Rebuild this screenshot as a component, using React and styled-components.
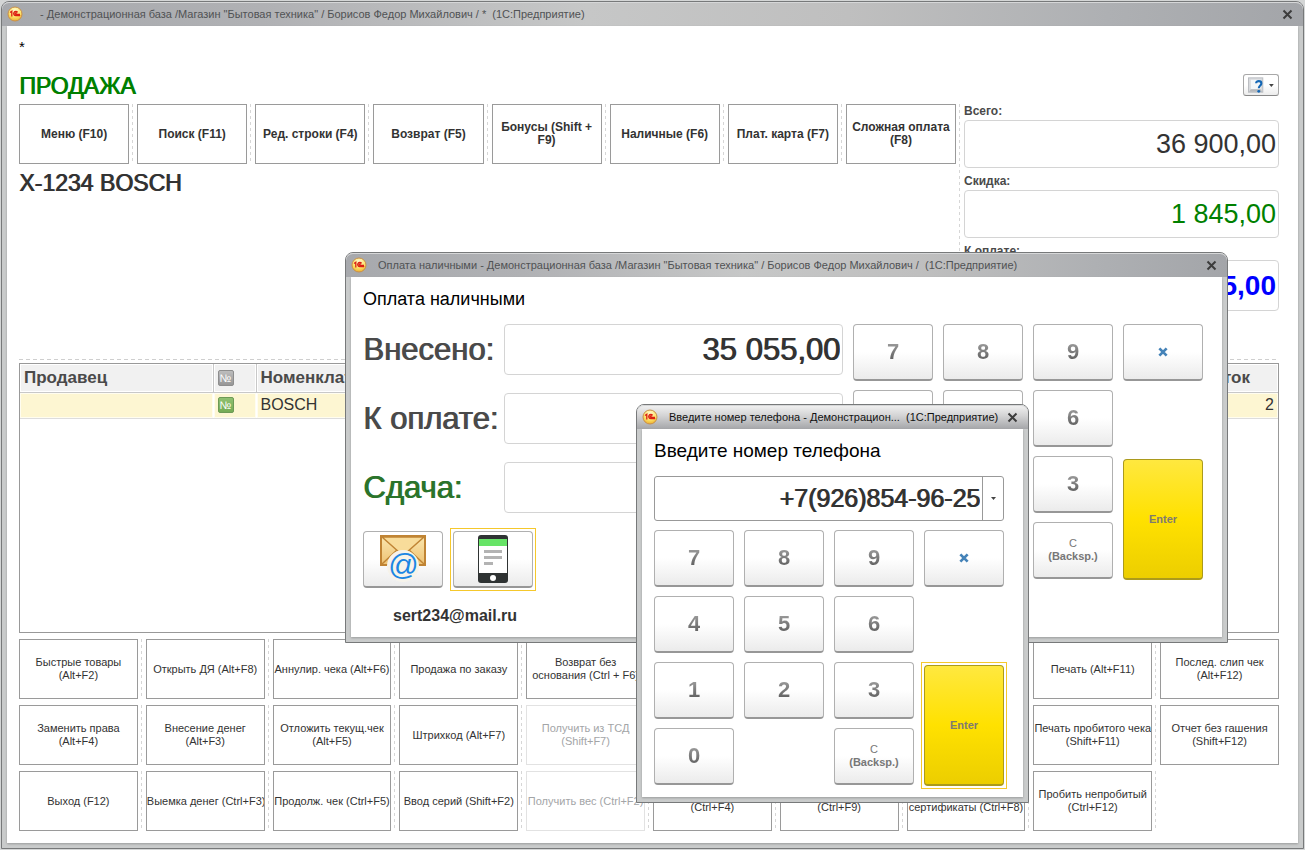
import React from "react";
import styled, { createGlobalStyle, css } from "styled-components";

const GlobalStyle = createGlobalStyle`
  * { box-sizing: border-box; }
  body {
    margin: 0;
    background: #d4d6d6;
    font-family: "Liberation Sans", Arial, sans-serif;
    font-size: 11px;
    color: #333;
  }
  button, input { font-family: inherit; color: inherit; }
`;

/* Regular letters thickened by one pixel, the way the till draws its big captions */
const thick = css`
  text-shadow: 1px 0 0 currentColor;
`;

const Desktop = styled.div`
  position: relative;
  display: flex;
  min-height: 100vh;
  padding: 1px;
`;

const Frame = styled.section`
  display: flex;
  flex-direction: column;
  border: 1px solid #77797a;
  border-radius: 8px 8px 0 0;
  background: #c9cbcb;
`;

const MainFrame = styled(Frame)`
  flex: 1;
  min-width: 0;
`;

const DialogFrame = styled(Frame)`
  position: absolute;
  left: ${(p) => p.$left}px;
  top: ${(p) => p.$top}px;
  width: ${(p) => p.$width}px;
`;

const TitleBar = styled.header`
  display: flex;
  align-items: center;
  height: 24px;
  padding: 0 8px 0 5px;
  border-radius: 7px 7px 0 0;
  box-shadow: inset 0 1px 0 #d6d7d8;
  color: ${(p) => (p.$active ? "#111" : "#505254")};
  background: ${(p) =>
    p.$active
      ? "linear-gradient(180deg, #f2f2f2 0%, #d3d3d4 45%, #a5a6a9 100%)"
      : "linear-gradient(90deg, #a7a9ad 0%, #b0b1b4 20%, #c6c7c7 45%, #bfbfbf 65%, #aeb0b3 85%, #a3a5a9 100%)"};
`;

const TitleText = styled.h1`
  flex: 1;
  min-width: 0;
  margin: 0 0 0 11px;
  overflow: hidden;
  white-space: pre;
  font-size: 11px;
  line-height: 16px;
  font-weight: 400;
`;

const CloseButton = styled.button`
  display: flex;
  padding: 2px;
  border: 0;
  background: none;
`;

const Body = styled.div`
  flex: 1;
  display: flex;
  flex-direction: column;
  margin: 0 5px 5px;
  padding: 12px 19px 12px 12px;
  background: #fff;
  box-shadow: 0 1px 2px #9a9c9c;
`;

const Status = styled.div`
  height: 36px;
  font-size: 15px;
  line-height: 18px;
  color: #000;
`;

const HeadRow = styled.div`
  display: flex;
  justify-content: space-between;
  align-items: flex-start;
  height: 30px;
`;

const Mode = styled.h2`
  ${thick}
  margin: 0;
  font-size: 23px;
  line-height: 24px;
  font-weight: 400;
  color: #008000;
`;

const HelpButton = styled.button`
  display: flex;
  align-items: center;
  gap: 5px;
  width: 36px;
  height: 22px;
  padding: 0 4px;
  border: 1px solid #a8a8a8;
  border-bottom-color: #888;
  border-radius: 3px;
  background: linear-gradient(#fff 50%, #ececec);
`;

const Upper = styled.div`
  display: flex;
  padding-bottom: 48px;
`;

const Left = styled.div`
  flex: 1;
  min-width: 0;
`;

const Divider = styled.div`
  flex: none;
  width: 1px;
  margin: 0 4px 0 3px;
  margin-bottom: ${(p) => (p.$long ? "-44px" : "0")};
  background: repeating-linear-gradient(#d6d6d6 0 3px, transparent 3px 6px);
`;

const Rule = styled.div`
  height: 1px;
  margin-bottom: 3px;
  background: repeating-linear-gradient(90deg, #cfcfcf 0 4px, transparent 4px 7px);
`;

const ButtonRow = styled.div`
  display: flex;
  height: 60px;
`;

const ActionButton = styled.button`
  flex: 1;
  min-width: 0;
  padding: 0;
  border: 1px solid #9a9a9a;
  background: #fff;
  font-size: ${(p) => (p.$strong ? "12px" : "11px")};
  line-height: 13px;
  font-weight: ${(p) => (p.$strong ? 700 : 400)};
  white-space: pre;
  text-align: center;
  overflow: hidden;
  &:disabled {
    color: #a3a5a7;
    border-color: #e2e2e2;
  }
`;

const EmptyCell = styled.div`
  flex: 1;
  border: 1px solid transparent;
`;

const Product = styled.h2`
  ${thick}
  margin: 6px 0 0;
  font-size: 23px;
  line-height: 26px;
  font-weight: 400;
`;

const Totals = styled.div`
  display: flex;
  flex-direction: column;
  gap: 6px;
  width: 315px;
`;

const TotalLabel = styled.label`
  display: flex;
  flex-direction: column;
  gap: 2px;
  font-size: 12px;
  line-height: 14px;
  font-weight: 700;
  color: #4a4a4a;
`;

const TotalInput = styled.input`
  width: 100%;
  height: ${(p) => (p.$due ? 51 : 48)}px;
  padding: 0 2px;
  border: 1px solid #d4d4d4;
  border-radius: 4px;
  font-size: ${(p) => (p.$due ? 28 : 27)}px;
  font-weight: ${(p) => (p.$due ? 700 : 400)};
  color: ${(p) => p.$color};
  text-align: right;
`;

const TableBox = styled.div`
  flex: 1;
  min-height: 270px;
  margin-bottom: 6px;
  border: 1px solid #999;
`;

const Table = styled.table`
  width: 100%;
  table-layout: fixed;
  border-collapse: collapse;
  font-size: 16px;
  line-height: 20px;
  th {
    height: 28px;
    padding: 0 4px;
    border-right: 1px solid #c8c8c8;
    border-bottom: 1px solid #c8c8c8;
    background: #f1f1f1;
    box-shadow: inset 0 0 0 1px #fff;
    font-size: 17px;
    text-align: left;
    color: #4a4a4a;
  }
  td {
    height: 26px;
    padding: 0 4px;
    border-right: 1px solid #fff;
    border-bottom: 1px solid #ddd;
    background: #fdf6d2;
    box-shadow: inset 0 0 0 1px #fffdf0;
  }
  th:last-child, td:last-child { border-right: 0; }
`;

const NumberCell = styled.td`
  text-align: right;
`;

const NumberBadge = styled.span`
  display: flex;
  align-items: center;
  justify-content: center;
  width: 16px;
  height: 16px;
  border: 1px solid ${(p) => (p.$green ? "#6d9a56" : "#8e8e8e")};
  border-radius: 2px;
  background: ${(p) =>
    p.$green ? "linear-gradient(#8fc070, #75ab55)" : "linear-gradient(#bdbdbd, #979797)"};
  color: #fff;
  font-size: 11px;
  line-height: 12px;
  font-weight: 400;
`;

const Footer = styled.div`
  display: flex;
  flex-direction: column;
  gap: 6px;
`;

const Heading = styled.h2`
  margin: 0 0 15px;
  font-size: ${(p) => (p.$large ? 19 : 18)}px;
  line-height: 20px;
  font-weight: 400;
  color: #000;
`;

const PayLayout = styled.div`
  display: flex;
  align-items: flex-start;
  gap: 10px;
`;

const PayForm = styled.div`
  flex: 1;
  display: flex;
  flex-direction: column;
  gap: 18px;
`;

const PayRow = styled.label`
  ${thick}
  display: grid;
  grid-template-columns: 141px 1fr;
  align-items: center;
  font-size: 31px;
  line-height: 36px;
  color: ${(p) => (p.$green ? "#2b742b" : "#4a4a4a")};
  white-space: nowrap;
`;

const PayInput = styled.input`
  ${thick}
  width: 100%;
  height: 51px;
  padding: 0 2px;
  border: 1px solid #d4d4d4;
  border-radius: 4px;
  color: #333;
  font-size: 31px;
  text-align: right;
`;

const SendRow = styled.div`
  display: flex;
  gap: 10px;
`;

const Email = styled.div`
  height: 19px;
  padding-left: 30px;
  font-size: 16px;
  line-height: 19px;
  font-weight: 700;
`;

const focusRing = css`
  position: relative;
  &::after {
    content: "";
    position: absolute;
    inset: -4px -4px -5px;
    border: 1px solid #f5c82c;
  }
`;

const Key = styled.button`
  display: flex;
  align-items: center;
  justify-content: center;
  width: 80px;
  height: 57px;
  padding: 0;
  border: 1px solid #b0b0b0;
  border-bottom: 2px solid #979797;
  border-radius: 4px;
  background: linear-gradient(#fff 50%, #ebebeb);
  ${(p) => p.$focused && focusRing}
`;

const EnterKey = styled(Key)`
  grid-column: 4;
  grid-row: 3 / span 2;
  height: 121px;
  margin-top: 3px;
  border-color: #ab9a1c;
  background: linear-gradient(#ffe83f, #ffe100 50%, #ecce00);
  color: #7f7a70;
  font-size: 11px;
  font-weight: 700;
`;

const Digit = styled.span`
  font-size: 22px;
  line-height: 26px;
  font-weight: 700;
  color: transparent;
  background: linear-gradient(#a0a0a0 10%, #585858 90%);
  background-clip: text;
`;

const KeyNote = styled.span`
  display: flex;
  flex-direction: column;
  font-size: 11px;
  line-height: 13px;
  color: #777;
`;

const Pad = styled.div`
  display: grid;
  grid-template-columns: repeat(4, 80px);
  grid-template-rows: repeat(4, 57px);
  gap: 9px 10px;
`;

const PadCell = styled.div`
  grid-column: ${(p) => p.$col};
  grid-row: ${(p) => p.$row};
`;

const Combo = styled.div`
  display: flex;
  height: 45px;
  margin-bottom: 9px;
  border: 1px solid #999;
  border-radius: 3px;
`;

const ComboInput = styled.input`
  ${thick}
  flex: 1;
  min-width: 0;
  padding: 0 2px;
  border: 0;
  background: none;
  font-size: 25px;
  text-align: right;
`;

const ComboButton = styled.button`
  display: flex;
  align-items: center;
  justify-content: center;
  width: 21px;
  padding: 0;
  border: 0;
  border-left: 1px solid #999;
  background: none;
`;

function Logo() {
  return (
    <svg width="16" height="16" viewBox="0 0 16 16" aria-hidden="true">
      <defs>
        <radialGradient id="coin" cx="50%" cy="25%" r="75%">
          <stop offset="0" stopColor="#fffbd0" />
          <stop offset="0.6" stopColor="#fde36a" />
          <stop offset="1" stopColor="#eeb02c" />
        </radialGradient>
      </defs>
      <circle cx="8" cy="8" r="7" fill="url(#coin)" stroke="#c98f4a" strokeWidth="1" />
      <path
        d="M3 6.5 4.8 5.2V10.5M10.6 6.4A2.1 2.1 0 1 0 8.8 9.6H13.2M9.6 7.6a.7.7 0 1 0-.7.7H13"
        fill="none"
        stroke="#dc1f12"
        strokeWidth="1.3"
      />
    </svg>
  );
}

function Cross({ size = 11, color = "#3c3c3c", width = 2 }) {
  return (
    <svg width={size} height={size} viewBox="0 0 11 11" aria-hidden="true">
      <path d="M1.5 1.5 9.5 9.5M9.5 1.5 1.5 9.5" stroke={color} strokeWidth={width} fill="none" />
    </svg>
  );
}

function Caret() {
  return (
    <svg width="5" height="3" viewBox="0 0 5 3" aria-hidden="true">
      <path d="M0 0H5L2.5 3Z" fill="#444" />
    </svg>
  );
}

function HelpIcon() {
  return (
    <svg width="17" height="17" viewBox="0 0 17 17" aria-hidden="true">
      <rect x="0.5" y="0.5" width="15" height="15" fill="#d9dbde" stroke="#b9bcc0" />
      <rect x="3" y="2.5" width="10" height="10" fill="#f4f6f8" />
      <path d="M1 15 3 12.5H13L15 15Z" fill="#b4b7bb" />
      <path
        d="M8.5 6.2C8.5 3.2 14 3.2 14 6.3C14 8.6 11.3 8.4 11.3 11.4"
        fill="none"
        stroke="#1467b5"
        strokeWidth="2.2"
      />
      <circle cx="11.3" cy="14.6" r="1.5" fill="#1467b5" />
    </svg>
  );
}

function MailIcon() {
  return (
    <svg width="46" height="50" viewBox="0 0 46 50" aria-hidden="true">
      <defs>
        <linearGradient id="paper" x1="0" y1="0" x2="0" y2="1">
          <stop offset="0" stopColor="#fbe7ae" />
          <stop offset="1" stopColor="#edc274" />
        </linearGradient>
      </defs>
      <rect x="1" y="2" width="44" height="29" fill="url(#paper)" stroke="#c08434" strokeWidth="2" />
      <path d="M2 30 17 16M44 30 29 16" stroke="#c08434" strokeWidth="1.5" />
      <path d="M2 3 20 19Q23 21 26 19L44 3Z" fill="#f8dc9a" stroke="#c08434" strokeWidth="1.5" />
      <circle cx="23" cy="32" r="16" fill="#f6f3ea" />
      <text
        x="23"
        y="41"
        textAnchor="middle"
        fontFamily="Liberation Sans, Arial, sans-serif"
        fontStyle="italic"
        fontSize="30"
        fill="#1b86e3"
      >
        @
      </text>
    </svg>
  );
}

function PhoneIcon() {
  return (
    <svg width="30" height="48" viewBox="0 0 30 48" aria-hidden="true">
      <rect width="30" height="48" rx="3" fill="#2f3333" />
      <rect x="1" y="4" width="28" height="7" fill="#67e467" />
      <rect x="1" y="11" width="28" height="27" fill="#fff" />
      <path d="M6 16.500H24M6 22.500H24M6 28.500H15" stroke="#b3b3b3" strokeWidth="3" />
      <circle cx="15" cy="43" r="3" fill="#fff" />
    </svg>
  );
}

function Title({ text, active }) {
  return (
    <TitleBar $active={active}>
      <Logo />
      <TitleText>{text}</TitleText>
      <CloseButton type="button" aria-label="Закрыть">
        <Cross />
      </CloseButton>
    </TitleBar>
  );
}

function Buttons({ items, strong }) {
  return (
    <ButtonRow>
      {items.map((item, i) => (
        <React.Fragment key={i}>
          {i > 0 && <Divider />}
          {item ? (
            <ActionButton type="button" $strong={strong} disabled={item.startsWith("Получить")}>
              {item}
            </ActionButton>
          ) : (
            <EmptyCell />
          )}
        </React.Fragment>
      ))}
    </ButtonRow>
  );
}

const digits = ["7", "8", "9", "4", "5", "6", "1", "2", "3", "0"];

function Keypad({ focused }) {
  return (
    <Pad>
      {digits.map((d, i) => (
        <PadCell key={d} $col={(i % 3) + 1} $row={Math.floor(i / 3) + 1}>
          <Key type="button">
            <Digit>{d}</Digit>
          </Key>
        </PadCell>
      ))}
      <PadCell $col={4} $row={1}>
        <Key type="button" aria-label="Очистить">
          <Cross size={10} color="#4583b8" width={3} />
        </Key>
      </PadCell>
      <PadCell $col={3} $row={4}>
        <Key type="button">
          <KeyNote>
            <span>C</span>
            <b>(Backsp.)</b>
          </KeyNote>
        </Key>
      </PadCell>
      <EnterKey type="button" $focused={focused}>
        Enter
      </EnterKey>
    </Pad>
  );
}

const topActions = [
  "Меню (F10)",
  "Поиск (F11)",
  "Ред. строки (F4)",
  "Возврат (F5)",
  "Бонусы (Shift +\nF9)",
  "Наличные (F6)",
  "Плат. карта (F7)",
  "Сложная оплата\n(F8)",
];

const footerActions = [
  [
    "Быстрые товары\n(Alt+F2)",
    "Открыть ДЯ (Alt+F8)",
    "Аннулир. чека (Alt+F6)",
    "Продажа по заказу",
    "Возврат без\nоснования (Ctrl + F6)",
    "Скидки",
    "Карта",
    "Сертификат",
    "Печать (Alt+F11)",
    "Послед. слип чек\n(Alt+F12)",
  ],
  [
    "Заменить права\n(Alt+F4)",
    "Внесение денег\n(Alt+F3)",
    "Отложить текущ.чек\n(Alt+F5)",
    "Штрихкод (Alt+F7)",
    "Получить из ТСД\n(Shift+F7)",
    "Скидка",
    "Покупатель",
    "Возврат",
    "Печать пробитого чека\n(Shift+F11)",
    "Отчет без гашения\n(Shift+F12)",
  ],
  [
    "Выход (F12)",
    "Выемка денег (Ctrl+F3)",
    "Продолж. чек (Ctrl+F5)",
    "Ввод серий (Shift+F2)",
    "Получить вес (Ctrl+F2)",
    "Карта\n(Ctrl+F4)",
    "Оплата\n(Ctrl+F9)",
    "Подарочные\nсертификаты (Ctrl+F8)",
    "Пробить непробитый\n(Ctrl+F12)",
    null,
  ],
];

export default function App() {
  return (
    <>
      <GlobalStyle />
      <Desktop>
        <MainFrame>
          <Title
            text={
              '  - Демонстрационная база /Магазин "Бытовая техника" / Борисов Федор Михайлович / *  (1С:Предприятие)'
            }
          />
          <Body>
            <Status>*</Status>
            <HeadRow>
              <Mode>ПРОДАЖА</Mode>
              <HelpButton type="button" aria-label="Справка">
                <HelpIcon />
                <Caret />
              </HelpButton>
            </HeadRow>
            <Upper>
              <Left>
                <Buttons items={topActions} strong />
                <Product>X-1234 BOSCH</Product>
              </Left>
              <Divider $long />
              <Totals>
                <TotalLabel>
                  Всего:
                  <TotalInput $color="#333" defaultValue="36 900,00" />
                </TotalLabel>
                <TotalLabel>
                  Скидка:
                  <TotalInput $color="#008000" defaultValue="1 845,00" />
                </TotalLabel>
                <TotalLabel>
                  К оплате:
                  <TotalInput $due $color="#0000ff" defaultValue="35 055,00" />
                </TotalLabel>
              </Totals>
            </Upper>
            <Rule />
            <TableBox>
              <Table>
                <colgroup>
                  <col width="193" />
                  <col width="43" />
                  <col />
                  <col width="100" />
                </colgroup>
                <thead>
                  <tr>
                    <th>Продавец</th>
                    <th>
                      <NumberBadge>№</NumberBadge>
                    </th>
                    <th>Номенклатура</th>
                    <th>Остаток</th>
                  </tr>
                </thead>
                <tbody>
                  <tr>
                    <td />
                    <td>
                      <NumberBadge $green>№</NumberBadge>
                    </td>
                    <td>BOSCH</td>
                    <NumberCell>2</NumberCell>
                  </tr>
                </tbody>
              </Table>
            </TableBox>
            <Footer>
              {footerActions.map((row, i) => (
                <Buttons key={i} items={row} />
              ))}
            </Footer>
          </Body>
        </MainFrame>

        <DialogFrame $left={345} $top={252} $width={883}>
          <Title
            text={
              'Оплата наличными - Демонстрационная база /Магазин "Бытовая техника" / Борисов Федор Михайлович /  (1С:Предприятие)'
            }
          />
          <Body>
            <Heading>Оплата наличными</Heading>
            <PayLayout>
              <PayForm>
                <PayRow>
                  Внесено:
                  <PayInput defaultValue="35 055,00" />
                </PayRow>
                <PayRow>
                  К оплате:
                  <PayInput defaultValue="" />
                </PayRow>
                <PayRow $green>
                  Сдача:
                  <PayInput defaultValue="" />
                </PayRow>
                <SendRow>
                  <Key type="button" aria-label="Отправить на почту">
                    <MailIcon />
                  </Key>
                  <Key type="button" $focused aria-label="Отправить на телефон">
                    <PhoneIcon />
                  </Key>
                </SendRow>
                <Email>sert234@mail.ru</Email>
              </PayForm>
              <Keypad />
            </PayLayout>
          </Body>
        </DialogFrame>

        <DialogFrame $left={636} $top={404} $width={393}>
          <Title active text={"Введите номер телефона - Демонстрацион...  (1С:Предприятие)"} />
          <Body>
            <Heading $large>Введите номер телефона</Heading>
            <Combo>
              <ComboInput aria-label="Номер телефона" defaultValue="+7(926)854-96-25" />
              <ComboButton type="button" aria-label="Выбрать">
                <Caret />
              </ComboButton>
            </Combo>
            <Keypad focused />
          </Body>
        </DialogFrame>
      </Desktop>
    </>
  );
}
